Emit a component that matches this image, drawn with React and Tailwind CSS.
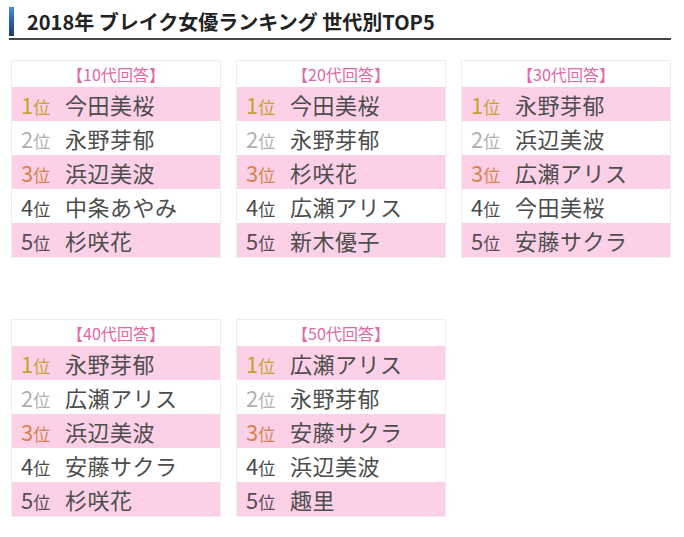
import React from 'react'

const DATA = [
  { label: '10代', names: ['今田美桜', '永野芽郁', '浜辺美波', '中条あやみ', '杉咲花'] },
  { label: '20代', names: ['今田美桜', '永野芽郁', '杉咲花', '広瀬アリス', '新木優子'] },
  { label: '30代', names: ['永野芽郁', '浜辺美波', '広瀬アリス', '今田美桜', '安藤サクラ'] },
  { label: '40代', names: ['永野芽郁', '広瀬アリス', '浜辺美波', '安藤サクラ', '杉咲花'] },
  { label: '50代', names: ['広瀬アリス', '永野芽郁', '安藤サクラ', '浜辺美波', '趣里'] },
]

// rank colours: gold, silver, bronze, then plain
const RANK_CLASS = [
  'text-[#c9a12e]',
  'text-[#b0b0b0]',
  'text-[#d9824a]',
  'text-[#4a4a4a]',
  'text-[#5a4a55]',
]

const RankCard = ({ label, names }) => (
  <div className="w-[210px] border border-[#eeeeee] bg-white">
    <div className="h-[26px] flex items-center justify-center text-[16px] leading-none text-[#e266a6]">
      【{label}回答】
    </div>
    {names.map((name, i) => (
      <div
        key={i}
        className={`h-[34px] flex items-center pl-[9px] ${i % 2 === 0 ? 'bg-[#fcd1e7]' : 'bg-white'}`}
      >
        <span className={`w-[44px] flex items-baseline ${RANK_CLASS[i]}`}>
          <span className="text-[22px] leading-none">{i + 1}</span>
          <span className="text-[17px] leading-none">位</span>
        </span>
        <span className="text-[22px] leading-none text-[#4d4d4d] tracking-[0.5px]">{name}</span>
      </div>
    ))}
  </div>
)

export default function App() {
  return (
    <div className="w-[684px] h-[537px] bg-white font-['Noto_Sans_CJK_JP','Noto_Sans',sans-serif]">
      <div className="pt-[7px] pl-[9px] pr-[13px]">
        <div className="flex items-center h-[29px]">
          <div className="w-[5px] h-[29px] bg-gradient-to-b from-[#4a8bd6] to-[#173b6e]" />
          <h2 className="ml-[13px] text-[20px] font-bold text-[#222] leading-none">
            2018年 ブレイク女優ランキング 世代別TOP5
          </h2>
        </div>
        <div className="mt-[2px] h-[2px] bg-[#464646]" />
      </div>
      <div className="mt-[20px] ml-[11px] grid grid-cols-[210px_210px_210px] gap-x-[15px] gap-y-[61px]">
        {DATA.map((d) => (
          <RankCard key={d.label} {...d} />
        ))}
      </div>
    </div>
  )
}
